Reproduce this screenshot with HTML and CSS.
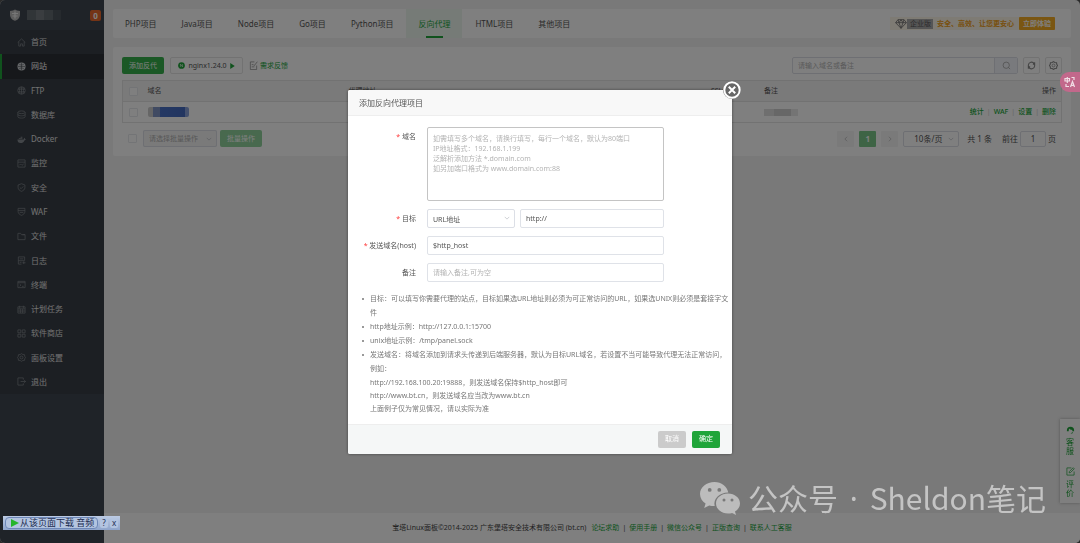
FILE: index.html
```html
<!DOCTYPE html>
<html lang="zh-CN">
<head>
<meta charset="utf-8">
<title>宝塔Linux面板</title>
<link rel="stylesheet" href="styles.css">
</head>
<body>
<div class="app">
  <aside class="sidebar">
    <header class="brand">
      <svg class="brand-logo" viewBox="0 0 12 12"><path d="M6 .5 8 1.500 11 2v3.500C11 9 8.500 11 6 11.800 3.500 11 1 9 1 5.500V2l3-.5z" fill="#bbb"/><path d="M3 4.500h6M3.500 7h5M6 2.500v7" stroke="#eee" stroke-width="1.200"/></svg>
      <span class="brand-mask"><i></i><i></i><i></i><i></i></span>
      <span class="badge">0</span>
    </header>
    <nav>
      <ul class="menu">
        <li><a href="#"><svg viewBox="0 0 10 10"><path d="M.8 5 5 1l4.200 4M2 4.200V9h2V6.500h2V9h2V4.200"/></svg>首页</a></li>
        <li class="active"><a href="#"><svg viewBox="0 0 10 10"><circle cx="5" cy="5" r="4.500" fill="#c8ccd0"/><path class="cut" d="M1 5h8M5 1v8M2.500 2.500c1.500 1 3.500 1 5 0M2.500 7.500c1.500-1 3.500-1 5 0"/></svg>网站</a></li>
        <li><a href="#"><svg viewBox="0 0 10 10"><circle cx="5" cy="5" r="4.200"/><path d="M1 3.500h8M1 6.500h8M5 1v8M3.500 1.500c-1 2-1 5 0 7M6.500 1.500c1 2 1 5 0 7"/></svg>FTP</a></li>
        <li><a href="#"><svg viewBox="0 0 10 10"><ellipse cx="5" cy="2.500" rx="4" ry="1.500"/><path d="M1 2.500v5c0 2 8 2 8 0v-5M1 5c0 2 8 2 8 0"/></svg>数据库</a></li>
        <li><a href="#"><svg viewBox="0 0 10 10"><path fill="#858a90" d="M.5 5h7c0-1 .3-1.600.8-2 .6.400.7 1 .6 1.500h.8C9.500 5.500 9 6 8.200 6 7.500 8 6 9 4 9 1.800 9 .5 7.500.5 5zM2 3.500h4V4.500H2zM4 2h2v1H4z"/></svg>Docker</a></li>
        <li><a href="#"><svg viewBox="0 0 10 10"><path d="M1 1h8v8H1zM1 3.500h8M2.500 7l1.500-1.500L5.500 7l2-1.500"/></svg>监控</a></li>
        <li><a href="#"><svg viewBox="0 0 10 10"><path d="m5 .8 3.800 1.400V5c0 2.200-1.800 3.500-3.800 4.300C3 8.500 1.200 7.200 1.200 5V2.200zM3.200 5l1.400 1.300L7 3.800"/></svg>安全</a></li>
        <li><a href="#"><svg viewBox="0 0 10 10"><path d="M1.200 1.500h7.600V5c0 2.200-1.800 3.500-3.800 4.300C3 8.500 1.200 7.200 1.200 5zM1.200 4h7.600M3 6h4"/></svg>WAF</a></li>
        <li><a href="#"><svg viewBox="0 0 10 10"><path d="M1 8.500v-7h3l1 1.500h4v5.500zM6 3h3"/></svg>文件</a></li>
        <li><a href="#"><svg viewBox="0 0 10 10"><path d="M8.500 5V1h-7v8H5M3 3.200h4M1.500 5.200h7M3 7h2M6 7.500h3.500M7.500 6v3"/></svg>日志</a></li>
        <li><a href="#"><svg viewBox="0 0 10 10"><path d="M1 1.500h8v7H1zM1 3h8M3 4.500 4.300 5.700 3 7M5.500 7h2"/></svg>终端</a></li>
        <li><a href="#"><svg viewBox="0 0 10 10"><path d="M1 2h8v7H1zM1 4.300h8M1 6.700h8M3 .8v3M7 .8v3M3.700 4.300V9M6.300 4.300V9"/></svg>计划任务</a></li>
        <li><a href="#"><svg viewBox="0 0 10 10"><path d="M1 1h3.200v3.200H1zM5.800 1H9v3.200H5.800zM1 5.800h3.200V9H1zM5.800 5.800H9V9H5.800z"/></svg>软件商店</a></li>
        <li><a href="#"><svg viewBox="0 0 10 10"><path d="m5 .7 1.500 1 1.900.2.200 1.800L9.500 5l-.9 1.300-.2 1.800-1.900.2-1.500 1-1.500-1-1.900-.2-.2-1.800L.5 5l.9-1.300.2-1.800 1.900-.2z"/><circle cx="5" cy="5" r="1.600"/></svg>面板设置</a></li>
        <li><a href="#"><svg viewBox="0 0 10 10"><path d="M7 3V1H1v8h6V7M4 5h5.500M8 3.500 9.500 5 8 6.500"/></svg>退出</a></li>
      </ul>
    </nav>
  </aside>

  <div class="main">
    <div class="content">
      <section class="card tabbar">
        <nav class="tabs">
          <a href="#">PHP项目</a><a href="#">Java项目</a><a href="#">Node项目</a><a href="#">Go项目</a><a href="#">Python项目</a><a href="#" class="current">反向代理</a><a href="#">HTML项目</a><a href="#">其他项目</a>
        </nav>
        <div class="promo">
          <svg class="gem" viewBox="0 0 12 10"><path d="M3 .7h6l2.400 3L6 9.300.6 3.700zM.6 3.700h10.800M3 .7l1 3 2 5.600 2-5.600 1-3M4 3.700l2-3 2 3"/></svg>
          <span class="edition">企业版</span>
          <strong>安全、高效、让您更安心</strong>
          <button type="button" class="try">立即体验</button>
        </div>
      </section>

      <section class="card panel">
        <div class="toolbar">
          <button type="button" class="btn green">添加反代</button>
          <button type="button" class="btn plain nginx">
            <svg viewBox="0 0 10 10"><circle cx="5" cy="5" r="4.800" fill="#20a53a"/><path d="M3.500 7V3l3 4V3" stroke="#fff" fill="none"/></svg>
            nginx1.24.0
            <svg class="play" viewBox="0 0 6 8"><path d="M0 0 6 4 0 8z" fill="#20a53a"/></svg>
          </button>
          <a href="#" class="feedback"><svg viewBox="0 0 10 10"><path d="M6 1H1.500v8.500h7V5M3 4h2M3 6.500h3M5.500 5.500 9.300.8"/></svg>需求反馈</a>
          <div class="tools">
            <div class="search"><input type="text" aria-label="搜索" placeholder="请输入域名或备注"><button type="button" aria-label="搜索"><svg viewBox="0 0 10 10"><circle cx="4.700" cy="4.700" r="3.500"/><path d="m7.300 7.300 1.700 1.700"/></svg></button></div>
            <button type="button" class="btn plain square" aria-label="刷新"><svg viewBox="0 0 10 10"><path class="bold" d="M1.500 6V4.500A3.500 3.500 0 0 1 8 3M8.500 4v1.500A3.500 3.500 0 0 1 2 7M6.500 3.500h2V1.500M3.500 6.500h-2v2"/></svg></button>
            <button type="button" class="btn plain square" aria-label="设置"><svg viewBox="0 0 10 10"><path class="bold" d="m5 .7 1.500 1 1.900.2.200 1.800L9.500 5l-.9 1.300-.2 1.800-1.900.2-1.500 1-1.500-1-1.900-.2-.2-1.800L.5 5l.9-1.300.2-1.800 1.900-.2z"/><circle cx="5" cy="5" r="1.600"/></svg></button>
          </div>
        </div>
        <table class="sites">
          <thead><tr><th class="c-check"><input type="checkbox" aria-label="全选"></th><th class="c-name">域名</th><th class="c-target">代理地址</th><th class="c-ssl">SSL证书</th><th>备注</th><th class="c-ops">操作</th></tr></thead>
          <tbody><tr><td class="c-check"><input type="checkbox" aria-label="选择"></td><td><span class="mask-blue"></span></td><td></td><td><span class="warn">未部署</span></td><td><span class="mask-grey"></span></td><td class="c-ops"><a href="#">统计</a><i>|</i><a href="#">WAF</a><i>|</i><a href="#">设置</a><i>|</i><a href="#">删除</a></td></tr></tbody>
        </table>
        <div class="batch">
          <input type="checkbox" aria-label="批量选择">
          <span class="select batch-select"><select aria-label="批量操作" disabled><option>请选择批量操作</option></select><svg viewBox="0 0 8 5"><path d="m1 1 3 3 3-3"/></svg></span>
          <button type="button" class="btn green faded">批量操作</button>
          <div class="pager">
            <button type="button" class="page" aria-label="上一页"><svg viewBox="0 0 5 8"><path d="M4 1 1 4l3 3"/></svg></button>
            <button type="button" class="page on">1</button>
            <button type="button" class="page" aria-label="下一页"><svg viewBox="0 0 5 8"><path d="m1 1 3 3-3 3"/></svg></button>
            <span class="select size-select"><select aria-label="每页条数"><option>10条/页</option></select><svg viewBox="0 0 8 5"><path d="m1 1 3 3 3-3"/></svg></span>
            <span class="total">共 1 条</span>
            <label class="jump">前往<input type="text" value="1">页</label>
          </div>
        </div>
      </section>
    </div>
    <footer class="footer">
      <span>宝塔Linux面板©2014-2025 广东堡塔安全技术有限公司 (bt.cn)</span>
      <a href="#">论坛求助</a><i>|</i><a href="#">使用手册</a><i>|</i><a href="#">微信公众号</a><i>|</i><a href="#">正版查询</a><i>|</i><a href="#">联系人工客服</a>
    </footer>
  </div>

  <div class="service">
    <a href="#"><svg viewBox="0 0 10 10"><path d="M1 6a4 4 0 0 1 8 0v1H7V5.500Q4 5.500 3.500 4 3 5 3 7H1zM5 9.500h2l1-2" fill="#20a53a"/></svg>客服</a>
    <a href="#"><svg viewBox="0 0 10 10"><path d="M6 1H1v8h8V5M3.500 6.500l.3-1.500L8 .8 9.200 2 5 6.200z"/></svg>评价</a>
  </div>
</div>

<div class="overlay">
  <form class="modal" role="dialog" aria-labelledby="title">
    <h2 id="title">添加反向代理项目</h2>
    <button type="button" class="close" aria-label="关闭"><svg viewBox="0 0 18 18"><circle cx="9" cy="9" r="7.700"/><path d="m5.800 5.800 6.400 6.400M12.200 5.800l-6.400 6.400"/></svg></button>
    <div class="modal-body">
      <div class="row">
        <label for="domain" class="req">域名</label>
        <textarea id="domain" placeholder="如需填写多个域名，请换行填写，每行一个域名，默认为80端口&#10;IP地址格式：192.168.1.199&#10;泛解析添加方法 *.domain.com&#10;如另加端口格式为 www.domain.com:88"></textarea>
      </div>
      <div class="row">
        <label for="target" class="req">目标</label>
        <div class="pair">
          <span class="select"><select id="target"><option>URL地址</option></select><svg viewBox="0 0 8 5"><path d="m1 1 3 3 3-3"/></svg></span>
          <input type="text" aria-label="目标地址" value="http://">
        </div>
      </div>
      <div class="row">
        <label for="host" class="req">发送域名(host)</label>
        <input id="host" type="text" value="$http_host">
      </div>
      <div class="row">
        <label for="remark">备注</label>
        <input id="remark" type="text" placeholder="请输入备注,可为空">
      </div>
      <ul class="notes">
        <li>目标：可以填写你需要代理的站点，目标如果选URL地址则必须为可正常访问的URL，如果选UNIX则必须是套接字文<br>件</li>
        <li>http地址示例：http://127.0.0.1:15700</li>
        <li>unix地址示例：/tmp/panel.sock</li>
        <li>发送域名：将域名添加到请求头传递到后端服务器，默认为目标URL域名，若设置不当可能导致代理无法正常访问，<br>例如：
          <div class="examples">http://192.168.100.20:19888，则发送域名保持$http_host即可<br>http://www.bt.cn，则发送域名应当改为www.bt.cn<br>上面例子仅为常见情况，请以实际为准</div>
        </li>
      </ul>
    </div>
    <div class="modal-foot">
      <button type="button" class="btn grey">取消</button>
      <button type="button" class="btn green">确定</button>
    </div>
  </form>
</div>

<button type="button" class="translate" aria-label="翻译"><svg viewBox="0 0 12 12"><path d="M1 2.500h4.500V5H1zM3.300 1v6M7.500 1.500H10v2.500M2 8v2.500h3"/><path d="m6.500 11 2-5.500 2 5.500M7.200 9.300h2.600"/></svg></button>
<div class="watermark">
  <svg viewBox="0 0 40 33"><path fill="#bcbcbc" fill-rule="evenodd" d="M14.500 0C6.500 0 0 5.300 0 12c0 4 2.200 7.300 5.600 9.500L4.200 26l5-2.600c1.800.5 3.600.8 5.500.7C13 17 19 10.500 28.300 10.500 27 4.500 21.500 0 14.500 0zM9.700 6a1.900 1.900 0 1 1 0 3.800 1.900 1.900 0 0 1 0-3.800zm9.600 0a1.900 1.900 0 1 1 0 3.800 1.900 1.900 0 0 1 0-3.800z"/><path fill="#bcbcbc" fill-rule="evenodd" d="M28 11.500c-6.700 0-12 4.400-12 10s5.300 10 12 10c1.500 0 2.800-.2 4.100-.6L36 33l-1-3.500c3-1.800 5-4.700 5-8 0-5.600-5.300-10-12-10zm-4 5a1.500 1.500 0 1 1 0 3 1.500 1.500 0 0 1 0-3zm8 0a1.500 1.500 0 1 1 0 3 1.500 1.500 0 0 1 0-3z"/></svg>
  <span>公众号<b> · </b>Sheldon笔记</span>
</div>
<div class="grabber">
  <button type="button" class="grab"><svg viewBox="0 0 8 8"><path d="M0 0 8 4 0 8z" fill="#25b52b"/></svg>从该页面下载 音频</button>
  <button type="button" aria-label="帮助">?</button>
  <button type="button" aria-label="关闭下载条">x</button>
</div>
</body>
</html>
```
FILE: styles.css
```css
* { box-sizing: border-box; }
body { margin: 0; background: #555; color: #555; font: 7px/10px "Noto Sans", "Noto Sans CJK SC", sans-serif; }
button, input, select, textarea { margin: 0; padding: 0; font: inherit; color: inherit; border: 0; outline: 0; background: none; }
ul { margin: 0; padding: 0; list-style: none; }
a { color: inherit; text-decoration: none; }
i { font-style: normal; }
svg { display: block; flex: none; width: 9px; height: 9px; fill: none; stroke: currentColor; stroke-width: 0.8; }
svg [fill]:not([stroke]) { stroke: none; }

.app { display: flex; min-height: 100vh; overflow: hidden; border-radius: 5px; background: #f2f2f2; }

/* sidebar */
.sidebar { flex: none; width: 104px; background: #3e4650; color: #e2e2e2; font-size: 8px; }
.brand { display: flex; align-items: center; height: 30px; padding: 0 3px 0 9px; gap: 6px; }
.brand-logo { width: 12px; height: 12px; }
.brand-mask { display: flex; width: 34px; height: 10px; }
.brand-mask i { flex: 1; background: #626a70; }
.brand-mask i:nth-child(even) { background: #747b80; }
.brand-mask i:last-child { background: #4c545c; }
.badge { margin-left: auto; width: 11px; border-radius: 2px; background: #e8682c; color: #fff; font-weight: 700; text-align: center; line-height: 11px; }
.menu { display: grid; grid-auto-rows: 1fr; min-height: 364px; background: #383e46; }
.menu a { display: flex; align-items: center; height: 100%; gap: 5px; padding-left: 15px; border-left: 2px solid transparent; }
.menu svg { color: #858a90; }
.menu .active a { background: #2d3136; border-color: #20a53a; color: #fff; }
.menu .cut { stroke: #2d3136; stroke-width: 0.5; }

/* page */
.main { display: flex; flex: 1; flex-direction: column; min-width: 0; }
.content { flex: 1; padding: 9px; display: flex; flex-direction: column; gap: 9px; }
.card { background: #fff; border-radius: 2px; }
.tabbar { display: flex; justify-content: space-between; align-items: center; padding-right: 16px; }
.tabs { display: flex; gap: 1px; font-size: 8px; line-height: 29px; }
.tabs a { padding: 0 12px; }
.tabs .current { display: flex; flex-direction: column; align-items: center; height: 29px; background: #edf7ef; color: #20a53a; }
.current::after { content: ""; width: 17px; height: 2px; margin-top: -2px; background: #20a53a; }
.promo { display: flex; align-items: center; height: 13px; padding-left: 5px; background: #fdf6e8; color: #f0a020; }
.gem { width: 12px; height: 10px; color: #777; stroke-width: 0.9; }
.edition { padding: 0 2px 0 3px; background: #aaa; color: #555; }
.promo strong { padding: 0 5px 0 4px; }
.try { padding: 0 4px; background: #f5ac25; color: #fff; border-radius: 1px; line-height: 13px; font-weight: 700; }
.panel { display: flex; flex-direction: column; padding: 10px 9px 9px; }
.toolbar, .batch, .tools, .pager { display: flex; align-items: center; }
.toolbar { gap: 6px; }
.btn { display: flex; align-items: center; justify-content: center; height: 17px; padding: 0 7px; border-radius: 2px; }
.green { background: #20a53a; color: #fff; }
.toolbar .green { background: #36b04c; }
.grey { background: #cbcbcb; color: #fff; }
.plain { border: 1px solid #e4e4e4; }
.nginx { gap: 3px; width: 73px; padding: 0; }
.nginx svg { width: 7px; height: 7px; }
.nginx .play { width: 5px; height: 6px; }
.feedback { display: flex; align-items: center; gap: 2px; color: #20a53a; }
.feedback svg { color: #888; }
.tools { flex: 1; justify-content: flex-end; gap: 5px; }
.search { display: flex; width: 226px; height: 17px; border: 1px solid #dcdfe6; border-radius: 2px; }
.search input { flex: 1; min-width: 0; padding: 0 5px; }
.search button { display: grid; place-items: center; width: 23px; background: #f3f5fa; border-left: 1px solid #dcdfe6; color: #999; }
::placeholder { color: #b4b4b4; opacity: 1; }
.square { width: 17px; padding: 0; }
.square svg { color: #888; }
.bold { stroke-width: 1.2; }
.sites { margin-top: 6px; border: 1px solid #e4e4e4; border-collapse: collapse; table-layout: fixed; width: 100%; }
.sites tr { height: 21px; border-bottom: 1px solid #e4e4e4; }
.sites thead { background: #f5f5f5; }
.sites th, .sites td { padding: 0; font-weight: 400; text-align: left; }
.sites .c-check { width: 25px; padding-left: 6px; }
.c-name { width: 21.4%; }
.c-target { width: 38.6%; }
.c-ssl { width: 53px; }
.sites .c-ops { padding-right: 5px; text-align: right; }
.sites td a { color: #20a53a; font-weight: 500; }
.sites td i { padding: 0 3px; color: #ccc; }
.warn { color: #f0a020; }
input[type="checkbox"] { appearance: none; display: block; width: 9px; height: 9px; border: 1px solid #e6e8ec; border-radius: 1px; background: #fff; }
.mask-blue { display: block; width: 41px; height: 10px; border-radius: 2px; background: linear-gradient(90deg, #ccc 5px, #8094c4 5px, #8094c4 12px, #4a72c8 12px, #456bc0 37px, #8aa3da 37px); }
.mask-grey { display: block; width: 34px; height: 7px; background: linear-gradient(90deg, #dedede 10px, #cfcfcf 10px, #cfcfcf 27px, #e8e8e8 27px); }
.batch { padding: 7px 6px 0; }
.select { position: relative; display: block; }
.select select { appearance: none; width: 100%; height: 100%; padding: 0 5px; border: 1px solid #dcdfe6; border-radius: 2px; opacity: 1; }
.select svg { position: absolute; right: 5px; top: calc(50% - 2px); width: 6px; height: 4px; color: #b0b3ba; pointer-events: none; }
.batch-select { width: 74px; height: 17px; margin: 0 3px 0 6px; background: #f5f5f5; color: #b0b0b0; }
.faded { background: #90d29d; }
.pager { flex: 1; justify-content: flex-end; gap: 5px; font-size: 8px; }
.page { display: grid; place-items: center; width: 17px; height: 16px; border-radius: 1px; background: #f4f4f5; color: #aaa; }
.page svg { width: 4px; height: 6px; }
.on { background: #7cc98b; color: #fff; font-weight: 700; }
.size-select { width: 56px; height: 16px; }
.size-select select { padding-left: 10px; }
.total { padding: 0 5px 0 3px; }
.jump { display: flex; align-items: center; gap: 2px; }
.jump input { width: 26px; height: 16px; border: 1px solid #dcdfe6; border-radius: 2px; text-align: center; }
.footer { display: flex; align-items: center; justify-content: center; height: 30px; background: #fff; color: #444; }
.footer span { padding-right: 5px; }
.footer a { color: #20a53a; }
.footer i { padding: 0 3px; }
.service { position: fixed; right: 0; bottom: 40px; display: flex; flex-direction: column; justify-content: space-between; width: 20px; height: 84px; padding: 6px; background: #fff; box-shadow: 0 0 3px #aaa; color: #20a53a; font-size: 8px; line-height: 9px; }
.service a { display: flex; flex-direction: column; align-items: center; gap: 3px; width: 8px; }

/* dialog */
.overlay { position: fixed; inset: 0; display: flex; align-items: center; justify-content: center; background: rgba(0, 0, 0, 0.5); }
.modal { position: relative; width: 384px; background: #fff; border-radius: 2px; box-shadow: 0 0 3px rgba(0, 0, 0, 0.5); }
.modal h2 { margin: 0; padding: 0 11px; height: 26px; border-bottom: 1px solid #eee; border-radius: 2px 2px 0 0; background: #f8f8f8; font-size: 8px; font-weight: 400; line-height: 25px; }
.close { position: absolute; top: -9px; right: -9px; width: 18px; height: 18px; border-radius: 50%; background: #666; color: #fff; }
.close svg { width: 18px; height: 18px; stroke-width: 2; }
.modal-body { display: flex; flex-direction: column; gap: 8px; padding: 11px 0 9px 14px; }
.row { display: grid; grid-template-columns: 54px 237px; gap: 11px; line-height: 19px; }
.row label { text-align: right; white-space: nowrap; }
.req::before { content: "* "; color: #f33; }
.row input, .row textarea { width: 100%; height: 19px; padding: 0 5px; border: 1px solid #dfe2e8; border-radius: 2px; }
.row textarea { display: block; height: 74px; padding: 6px 5px; border-color: #c4c4c4; line-height: 10px; resize: none; }
.pair { display: grid; grid-template-columns: 88px 1fr; gap: 5px; }
.pair .select { height: 19px; }
.notes { margin: 2px 0 0 8px; line-height: 14px; color: #777; white-space: nowrap; }
.notes li { position: relative; }
.notes li::before { content: ""; position: absolute; left: -8px; top: 6px; width: 2px; height: 2px; border-radius: 50%; background: #777; }
.examples { line-height: 13px; }
.modal-foot { display: flex; justify-content: flex-end; gap: 6px; padding: 6px 12px; border-top: 1px solid #eee; border-radius: 0 0 2px 2px; background: #f5f7f7; }
.modal-foot .btn { width: 28px; padding: 0; }

/* floating pieces */
.translate { position: fixed; right: 0; top: 72px; display: grid; place-items: center; width: 20px; height: 20px; border-radius: 9px 0 0 9px; background: #c2688b; color: #f0dde5; }
.translate svg { width: 12px; height: 12px; stroke-width: 1.2; }
.watermark { position: fixed; right: 34px; bottom: 24px; display: flex; align-items: center; gap: 8px; color: #c4c4c4; font: 30px/40px "Noto Sans CJK SC", sans-serif; white-space: nowrap; }
.watermark b { font-family: "Noto Sans", sans-serif; font-weight: 400; padding: 0 4px; }
.watermark svg { width: 40px; height: 33px; }
.grabber { position: fixed; left: 3px; bottom: 13px; display: flex; align-items: center; gap: 2px; height: 14px; padding: 0 2px; background: linear-gradient(#bccbe4, #8fa5cc); color: #1c2c50; font-size: 8px; }
.grabber .grab { display: flex; align-items: center; gap: 1px; width: 93px; height: 12px; padding: 0 5px; border: 1px solid #6e88b8; border-radius: 4px; font-size: 9px; white-space: nowrap; }
.grabber button { width: 8px; height: 9px; border-radius: 2px; background: #b3c4e0; line-height: 8px; }
.grabber svg { width: 8px; height: 8px; }
```
